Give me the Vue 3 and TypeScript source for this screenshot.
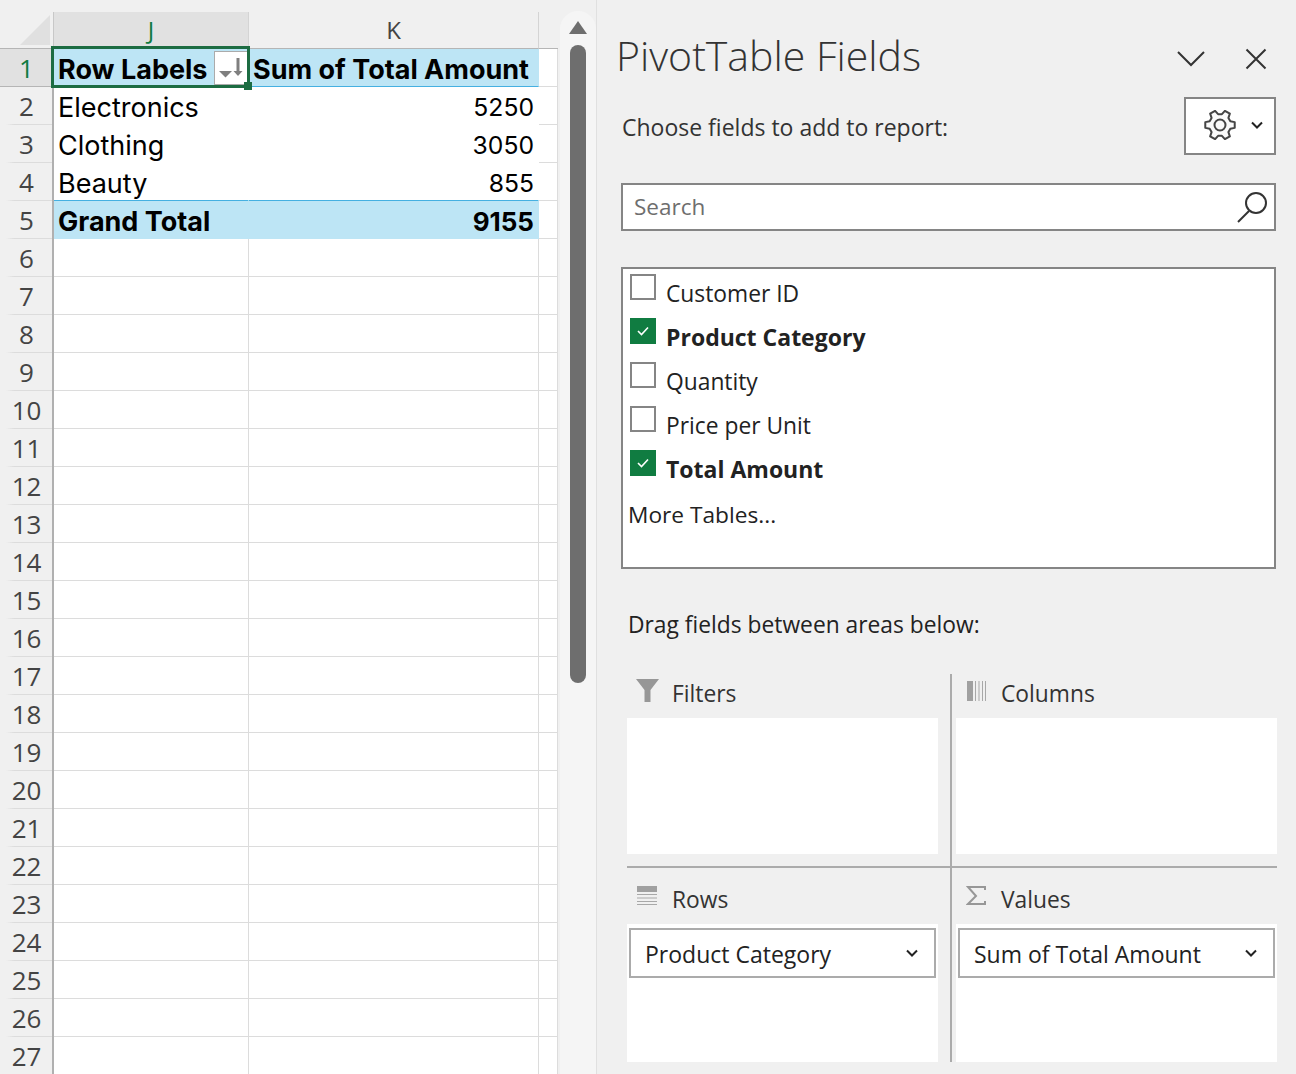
<script setup lang="ts">
const rowNums: number[] = []
for (let i = 6; i <= 27; i++) rowNums.push(i)

const fields = [
  { name: 'Customer ID', on: false },
  { name: 'Product Category', on: true },
  { name: 'Quantity', on: false },
  { name: 'Price per Unit', on: false },
  { name: 'Total Amount', on: true },
]

function gearPath(cx: number, cy: number): string {
  const pts: string[] = []
  const P = (r: number, deg: number) => {
    const a = (deg * Math.PI) / 180
    return `${(cx + r * Math.cos(a)).toFixed(2)} ${(cy + r * Math.sin(a)).toFixed(2)}`
  }
  for (let i = 0; i < 6; i++) {
    const a = i * 60
    pts.push((i === 0 ? 'M' : 'L') + P(15, a - 11))
    pts.push('L' + P(15, a + 11))
    pts.push('L' + P(11, a + 20))
    pts.push('L' + P(11, a + 40))
  }
  return pts.join(' ') + ' Z'
}
const gear = gearPath(17, 15)
</script>

<template>
  <div class="app">
    <section class="sheet">
      <div class="row colhead">
        <div class="corner"><span class="tri"></span></div>
        <div class="ch j sel">J</div>
        <div class="ch k">K</div>
        <div class="ch l"></div>
      </div>
      <div class="row">
        <div class="rh sel">1</div>
        <div class="c j pv head">
          Row Labels
          <span class="selbox"></span>
          <span class="handle"></span>
          <span class="fbtn">
            <svg width="32" height="32" viewBox="0 0 32 32">
              <path d="M4 19h13l-6.500 6.500z" fill="#7f7f7f" />
              <path d="M23 6v15" stroke="#7f7f7f" stroke-width="3" fill="none" />
              <path d="M18.500 19h9l-4.500 5z" fill="#7f7f7f" />
            </svg>
          </span>
        </div>
        <div class="c k pv head">Sum of Total Amount</div>
        <div class="c l"></div>
      </div>
      <div class="row">
        <div class="rh">2</div>
        <div class="c j plain">Electronics</div>
        <div class="c k plain num">5250</div>
        <div class="c l"></div>
      </div>
      <div class="row">
        <div class="rh">3</div>
        <div class="c j plain">Clothing</div>
        <div class="c k plain num">3050</div>
        <div class="c l"></div>
      </div>
      <div class="row">
        <div class="rh">4</div>
        <div class="c j plain last">Beauty</div>
        <div class="c k plain last num">855</div>
        <div class="c l"></div>
      </div>
      <div class="row">
        <div class="rh">5</div>
        <div class="c j pv total">Grand Total</div>
        <div class="c k pv total num">9155</div>
        <div class="c l"></div>
      </div>
      <div v-for="n in rowNums" :key="n" class="row">
        <div class="rh">{{ n }}</div>
        <div class="c j"></div>
        <div class="c k"></div>
        <div class="c l"></div>
      </div>
    </section>

    <aside class="scroll">
      <div class="track">
        <span class="up"></span>
        <span class="thumb"></span>
      </div>
    </aside>

    <main class="panel">
      <header class="title-row">
        <h1>PivotTable Fields</h1>
        <svg class="ico-chev" width="28" height="16" viewBox="0 0 28 16">
          <path d="M1 1l13 13L27 1" fill="none" stroke="#333" stroke-width="2" />
        </svg>
        <svg class="ico-x" width="22" height="22" viewBox="0 0 22 22">
          <path d="M1.500 1.500l19 19M20.500 1.500l-19 19" fill="none" stroke="#333" stroke-width="2" />
        </svg>
      </header>

      <div class="choose-row">
        <span class="choose">Choose fields to add to report:</span>
        <div class="gearbtn">
          <svg width="34" height="30" viewBox="0 0 34 30">
            <path :d="gear" fill="#fafafa" stroke="#444" stroke-width="2" stroke-linejoin="round" />
            <circle cx="17" cy="15" r="5.500" fill="none" stroke="#444" stroke-width="2" />
          </svg>
          <svg width="12" height="8" viewBox="0 0 12 8">
            <path d="M1 1.500l5 5 5-5" fill="none" stroke="#222" stroke-width="2" />
          </svg>
        </div>
      </div>

      <div class="search">
        <span>Search</span>
        <svg width="32" height="34" viewBox="0 0 32 34">
          <circle cx="20" cy="13" r="10" fill="none" stroke="#333" stroke-width="2" />
          <path d="M13 21L2 32" fill="none" stroke="#333" stroke-width="2" />
        </svg>
      </div>

      <div class="list">
        <div v-for="f in fields" :key="f.name" class="field">
          <span class="cb" :class="{ on: f.on }">
            <svg v-if="f.on" width="14" height="12" viewBox="0 0 14 12">
              <path d="M2 6l3.500 3.500L12 2.500" fill="none" stroke="#fff" stroke-width="1.600" />
            </svg>
          </span>
          <span class="fname" :class="{ bold: f.on }">{{ f.name }}</span>
        </div>
        <div class="more">More Tables...</div>
      </div>

      <div class="drag">Drag fields between areas below:</div>

      <div class="areas">
        <div class="area a-filters">
          <div class="area-label">
            <svg class="area-ico" width="24" height="24" viewBox="0 0 24 24">
              <path d="M0 0h23L14.500 11v12h-6V11z" fill="#979797" />
            </svg>
            <span>Filters</span>
          </div>
          <div class="well"></div>
        </div>
        <div class="area a-cols">
          <div class="area-label">
            <svg class="area-ico" width="24" height="24" viewBox="0 0 24 24">
              <rect x="1" y="2" width="6" height="20" fill="#a0a0a0" />
              <path d="M9.500 2v20M13 2v20M16.500 2v20M19.500 2v20" stroke="#a8a8a8" stroke-width="1" />
            </svg>
            <span>Columns</span>
          </div>
          <div class="well"></div>
        </div>
        <div class="area a-rows">
          <div class="area-label">
            <svg class="area-ico" width="24" height="24" viewBox="0 0 24 24">
              <rect x="1" y="2" width="20" height="6" fill="#a0a0a0" />
              <path d="M1 10.500h20M1 14h20M1 17.500h20M1 20.500h20" stroke="#a8a8a8" stroke-width="1" />
            </svg>
            <span>Rows</span>
          </div>
          <div class="well low">
            <div class="pill"><span>Product Category</span>
              <svg width="12" height="8" viewBox="0 0 12 8"><path d="M1 1.500l5 5 5-5" fill="none" stroke="#222" stroke-width="2" /></svg>
            </div>
          </div>
        </div>
        <div class="area a-vals">
          <div class="area-label">
            <svg class="area-ico" width="24" height="24" viewBox="0 0 24 24">
              <path d="M19 6V3H2l8 9-8 8h17v-3" fill="none" stroke="#979797" stroke-width="2" />
            </svg>
            <span>Values</span>
          </div>
          <div class="well low">
            <div class="pill"><span>Sum of Total Amount</span>
              <svg width="12" height="8" viewBox="0 0 12 8"><path d="M1 1.500l5 5 5-5" fill="none" stroke="#222" stroke-width="2" /></svg>
            </div>
          </div>
        </div>
      </div>
    </main>
  </div>
</template>

<style>
html, body { margin: 0; background: #f0f0f0; overflow: hidden; }
</style>

<style scoped>
.app {
  display: flex;
  width: 1296px;
  height: 1074px;
  overflow: hidden;
  background: #f0f0f0;
  color: #222;
  font-family: "Open Sans", "Noto Sans", sans-serif;
}
.sheet {
  width: 558px;
  flex: none;
  padding-top: 12px;
  box-sizing: border-box;
  font-family: Inter, "Liberation Sans", sans-serif;
}
.row { display: flex; height: 38px; box-sizing: border-box; }
.row.colhead { height: 37px; }
.corner { width: 54px; flex: none; position: relative; border-bottom: 1px solid #b5b5b5; box-sizing: border-box; border-right: 1px solid #c8c8c8; }
.tri { position: absolute; right: 3px; bottom: 3px; width: 0; height: 0; border-left: 30px solid transparent; border-bottom: 30px solid #e0e0e0; }
.ch {
  display: flex; align-items: center; justify-content: center;
  box-sizing: border-box;
  border-right: 1px solid #d4d4d4;
  border-bottom: 1px solid #b5b5b5;
  font-size: 24px;
  font-family: "Open Sans", sans-serif;
  color: #444;
  padding-bottom: 2px;
}
.ch.sel { background: #e1e1e1; color: #107c41; }
.j { width: 195px; flex: none; }
.k { width: 290px; flex: none; }
.l { width: 19px; flex: none; }
.ch.l { border-right: 0; }
.rh {
  width: 54px; flex: none; box-sizing: border-box;
  display: flex; align-items: center; justify-content: center;
  padding-left: 1px;
  border-right: 2px solid #b0b0b0;
  background: linear-gradient(90deg, #f0f0f0 6px, #dcdcdc 14px) bottom / 100% 1px no-repeat;
  font-size: 26px;
  font-family: "Open Sans", sans-serif;
  color: #444;
}
.rh.sel { background: #e1e1e1; color: #107c41; border-bottom: 1px solid #b5b5b5; }
.c {
  box-sizing: border-box;
  background: #fff;
  border-right: 1px solid #dcdcdc;
  border-bottom: 1px solid #dcdcdc;
  display: flex; align-items: center;
  padding: 3px 4px 0 4px;
  font-size: 27px;
  color: #000;
  white-space: nowrap;
  position: relative;
}
.num { justify-content: flex-end; font-size: 24.700px; }
.plain { border-color: #fff; }
.plain.last { border-bottom-color: #45b0e1; }
.pv { background: #bde5f5; border-right-color: #bde5f5; border-bottom-color: #bde5f5; font-weight: 700; }
.pv.num { font-size: 26px; }
.head { border-bottom-color: #45b0e1; }
.selbox { position: absolute; left: -3px; top: -3px; right: -2px; bottom: -2px; border: 3px solid #1c6c42; pointer-events: none; z-index: 2; }
.handle { position: absolute; right: -4px; bottom: -4px; width: 8px; height: 8px; background: #1c6c42; z-index: 3; }
.fbtn { position: absolute; right: 0; top: 2px; width: 34px; height: 34px; box-sizing: border-box; background: #fff; border: 1px solid #ababab; z-index: 1; display: flex; align-items: center; justify-content: center; }

.scroll { width: 39px; flex: none; padding-top: 11px; box-sizing: border-box; border-right: 1px solid #e0e0e0; }
.track { width: 36px; margin-left: 2px; height: 1063px; background: #f5f5f5; border-radius: 18px 18px 0 0; display: flex; flex-direction: column; align-items: center; }
.up { margin-top: 10px; width: 0; height: 0; border-left: 9px solid transparent; border-right: 9px solid transparent; border-bottom: 13px solid #6e6e6e; }
.thumb { margin-top: 11px; width: 16px; height: 638px; border-radius: 8px; background: #6e6e6e; }

.panel { flex: 1; box-sizing: border-box; padding: 0 20px 0 24px; min-width: 0; }
.title-row { display: flex; align-items: center; height: 97px; padding-top: 13px; box-sizing: border-box; margin-left: -4px; }
h1 { margin: 0 0 0 -1px; font-weight: 300; font-size: 41px; color: #333; flex: 1; white-space: nowrap; }
.ico-chev { margin-right: 40px; margin-top: 8px; }
.ico-x { margin-right: 9px; margin-top: 8px; }
.choose-row { display: flex; align-items: center; justify-content: space-between; height: 58px; padding-left: 1px; }
.choose { font-size: 23px; color: #333; padding-top: 2px; }
.gearbtn { width: 92px; height: 58px; box-sizing: border-box; background: #fff; border: 2px solid #858585; display: flex; align-items: center; padding: 0 0 2px 17px; gap: 14px; }
.search { margin-top: 28px; height: 48px; box-sizing: border-box; background: #fff; border: 2px solid #858585; display: flex; align-items: center; justify-content: space-between; padding: 0 6px 0 11px; font-size: 22.500px; color: #6e6e6e; }
.search span { margin-top: -2px; }
.list { margin-top: 36px; height: 302px; box-sizing: border-box; background: #fff; border: 2px solid #858585; padding: 5px 0 0 7px; }
.field { display: flex; height: 44px; }
.cb { width: 26px; height: 26px; box-sizing: border-box; border: 2px solid #858585; margin-right: 9px; display: flex; align-items: center; justify-content: center; flex: none; }
.cb.on { background: #107c41; border-color: #107c41; }
.fname { font-size: 22.800px; line-height: 40px; color: #222; padding-left: 1px; }
.bold { font-weight: 700; font-size: 23px; line-height: 38px; padding-left: 1px; }
.more { font-size: 22.700px; line-height: 38px; margin: 2px 0 0 -2px; }
.drag { margin-top: 36px; padding-left: 7px; font-size: 22.800px; line-height: 40px; }
.areas { margin-top: 29px; margin-left: 6px; display: grid; grid-template-columns: 325px 1fr; grid-template-rows: 194px 194px; width: 650px; }
.area { box-sizing: border-box; }
.a-filters, .a-rows { border-right: 2px solid #ababab; padding-right: 12px; }
.a-cols, .a-vals { padding-left: 4px; }
.a-filters, .a-cols { border-bottom: 2px solid #ababab; }
.area-label { display: flex; align-items: center; height: 44px; font-size: 22.800px; color: #333; }
.a-filters .area-label span, .a-cols .area-label span { padding-bottom: 6px; }
.a-rows .area-label, .a-vals .area-label { height: 56px; padding-top: 6px; box-sizing: border-box; }
.area-ico { margin: -10px 12px 0 9px; }
.a-rows .area-ico, .a-vals .area-ico { margin-top: -6px; }
.a-cols .area-ico, .a-vals .area-ico { margin-left: 10px; margin-right: 11px; }
.well { height: 136px; background: #fff; margin-bottom: 12px; }
.well.low { height: 138px; padding: 4px 2px; box-sizing: border-box; }
.pill { height: 50px; box-sizing: border-box; border: 2px solid #ababab; display: flex; align-items: center; justify-content: space-between; padding: 2px 16px 0 14px; font-size: 23px; }
.pill svg { margin-top: -2px; }
</style>
